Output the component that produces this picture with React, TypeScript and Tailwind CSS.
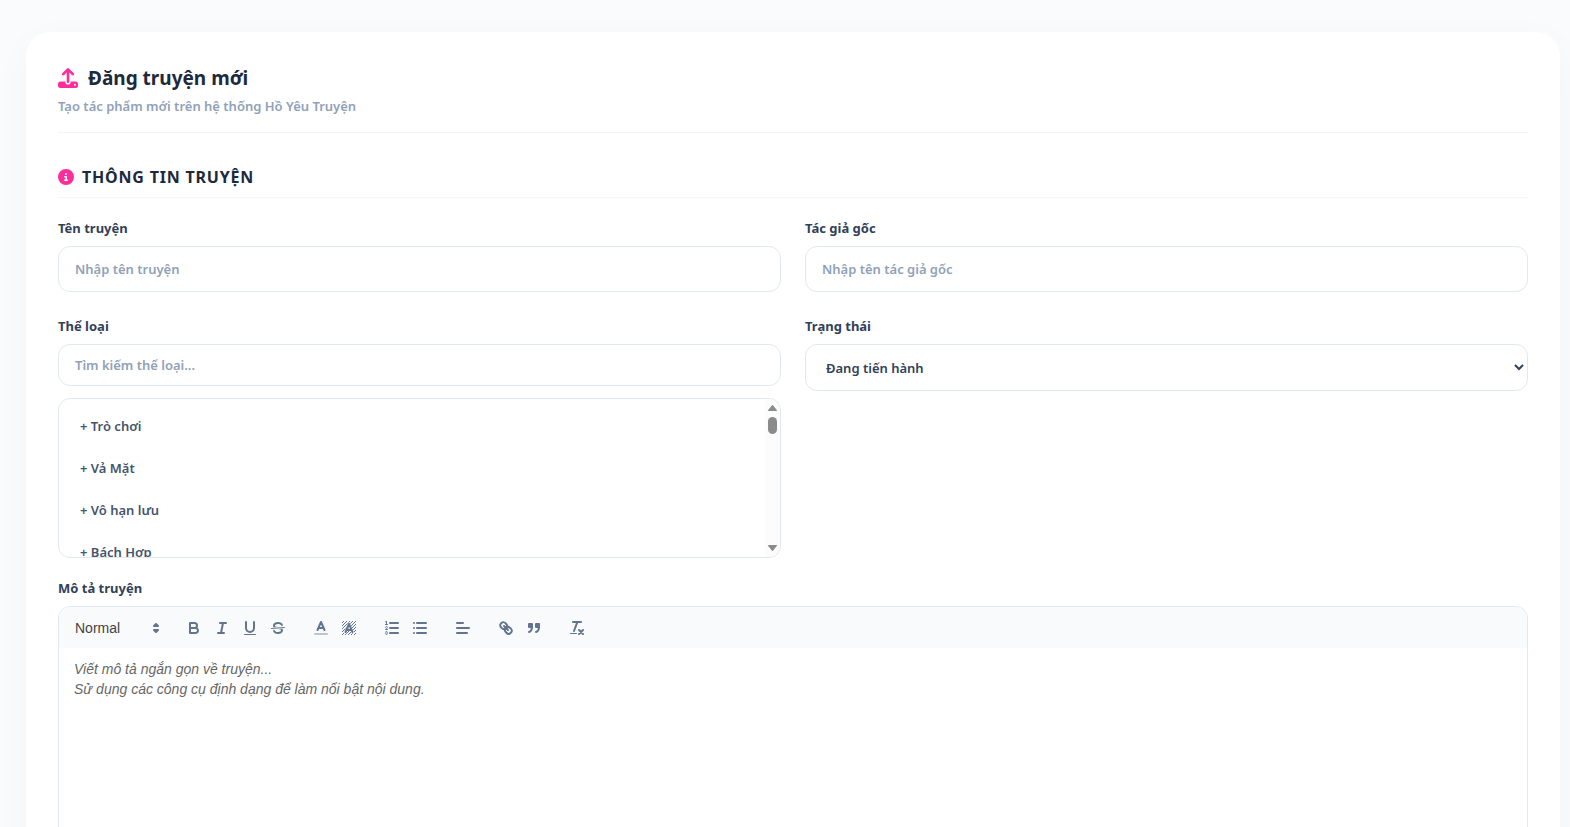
import { ReactNode, useState } from "react";
import { FaCircleInfo } from "react-icons/fa6";

const genres = ["Trò chơi", "Vả Mặt", "Vô hạn lưu", "Bách Hợp"];

const labelClass = "mb-2 block text-[13px] leading-5 font-bold text-slate-700";
const fieldClass =
  "block w-full rounded-xl border border-slate-200 bg-white px-4 text-[13px] leading-5 font-semibold text-slate-700 outline-none placeholder:text-slate-400 focus:border-pink-400";

function UploadIcon() {
  return (
    <svg className="size-5 text-[#ff2d9b]" viewBox="0 0 20 20" fill="none" stroke="currentColor" aria-hidden="true">
      <path
        fill="currentColor"
        stroke="none"
        d="M2.5 13.5H7.4V14a2.6 2.6 0 0 0 5.2 0V13.5H17.5A2.5 2.5 0 0 1 20 16v1.5a2.5 2.5 0 0 1-2.5 2.5h-15A2.5 2.5 0 0 1 0 17.5V16a2.5 2.5 0 0 1 2.5-2.5Z"
      />
      <circle cx="16.9" cy="16.8" r="1" fill="#fff" stroke="none" />
      <path strokeWidth="2.6" strokeLinecap="round" strokeLinejoin="round" d="M10 13.8V1.8M5.2 6.2l4.8-4.8 4.8 4.8" />
    </svg>
  );
}

interface ToolProps {
  label: string;
  children: ReactNode;
}

function Tool({ label, children }: ToolProps) {
  return (
    <button type="button" aria-label={label} className="h-6 w-7 px-[5px] py-[3px] text-slate-500 hover:text-pink-500">
      <svg
        className="size-[18px]"
        viewBox="0 0 18 18"
        fill="none"
        stroke="currentColor"
        strokeWidth="2"
        strokeLinecap="round"
        strokeLinejoin="round"
      >
        {children}
      </svg>
    </button>
  );
}

function Group({ children }: { children: ReactNode }) {
  return <div className="mr-[15px] flex">{children}</div>;
}

function Toolbar() {
  return (
    <div role="toolbar" aria-label="Định dạng" className="flex flex-wrap bg-slate-50 px-2 pt-[9px] pb-2">
      <Group>
        <button
          type="button"
          className="flex h-6 w-[98px] items-center justify-between pl-2 font-['Liberation_Sans',sans-serif] text-sm font-medium text-[#444]"
        >
          Normal
          <svg
            className="size-[18px] text-slate-500"
            viewBox="0 0 18 18"
            fill="currentColor"
            stroke="currentColor"
            strokeWidth="2"
            strokeLinejoin="round"
            aria-hidden="true"
          >
            <polygon points="7 11 9 13 11 11 7 11" />
            <polygon points="7 7 9 5 11 7 7 7" />
          </svg>
        </button>
      </Group>
      <Group>
        <Tool label="Đậm">
          <path d="M5,4H9.5A2.5,2.5,0,0,1,12,6.5v0A2.5,2.5,0,0,1,9.5,9H5V4Z" />
          <path d="M5,9h5.5A2.5,2.5,0,0,1,13,11.5v0A2.5,2.5,0,0,1,10.5,14H5V9Z" />
        </Tool>
        <Tool label="Nghiêng">
          <path d="M7,4H13M5,14H11M8,14L10,4" />
        </Tool>
        <Tool label="Gạch chân">
          <path d="M5,3V9a4.012,4.012,0,0,0,4,4H9a4.012,4.012,0,0,0,4-4V3" />
          <rect x="3" y="15" width="12" height="1" rx="0.5" fill="currentColor" stroke="none" />
        </Tool>
        <Tool label="Gạch ngang">
          <path strokeWidth="1" d="M15.5,8.5L2.5,9.5" />
          <path
            fill="currentColor"
            stroke="none"
            d="M9.007,8C6.542,7.791,6,7.519,6,6.5,6,5.792,7.283,5,9,5c1.571,0,2.765.679,2.969,1.309a1,1,0,0,0,1.9-.617C13.356,4.106,11.354,3,9,3,6.2,3,4,4.538,4,6.5a3.2,3.2,0,0,0,.5,1.843Z"
          />
          <path
            fill="currentColor"
            stroke="none"
            d="M8.984,10C11.457,10.208,12,10.479,12,11.5c0,.708-1.283,1.5-3,1.5-1.571,0-2.765-.679-2.969-1.309a1,1,0,1,0-1.9.617C4.644,13.894,6.646,15,9,15c2.8,0,5-1.538,5-3.5a3.2,3.2,0,0,0-.5-1.843Z"
          />
        </Tool>
      </Group>
      <Group>
        <Tool label="Màu chữ">
          <path opacity="0.4" d="M3,15H15" />
          <path d="M5.5,11L9,3L12.5,11M11.63,9H6.38" />
        </Tool>
        <Tool label="Màu nền">
          <path
            strokeWidth="1"
            strokeLinecap="butt"
            d="M2,4L4,2M2,7L7,2M2,10L10,2M2,13L13,2M2,16L16,2M5,16L16,5M8,16L16,8M11,16L16,11M14,16L16,14"
          />
          <path className="stroke-slate-50" strokeWidth="3" d="M5.5,13L9,5L12.5,13" />
          <path d="M5.5,13L9,5L12.5,13M11.63,11H6.38" />
        </Tool>
      </Group>
      <Group>
        <Tool label="Danh sách số">
          <path d="M7,4H15M7,9H15M7,14H15" />
          <path strokeWidth="1" d="M2.5,5.5H4.5" />
          <path
            fill="currentColor"
            stroke="none"
            d="M3.5,6A.5.5,0,0,1,3,5.5V3.085l-.276.138A.5.5,0,0,1,2.053,3c-.124-.247-.023-.324.224-.447l1-.5A.5.5,0,0,1,4,2.5v3A.5.5,0,0,1,3.5,6Z"
          />
          <path strokeWidth="1" d="M4.5,10.5h-2c0-.234,1.85-1.076,1.85-2.234A.959.959,0,0,0,2.5,8.156" />
          <path
            strokeWidth="1"
            d="M2.5,14.846a.959.959,0,0,0,1.85-.109A.7.7,0,0,0,3.75,14a.688.688,0,0,0,.6-.736.959.959,0,0,0-1.85-.109"
          />
        </Tool>
        <Tool label="Danh sách">
          <path d="M6,4H15M6,9H15M6,14H15M3,4H3.01M3,9H3.01M3,14H3.01" />
        </Tool>
      </Group>
      <Group>
        <Tool label="Căn lề">
          <path d="M3,4H9M3,9H15M3,14H13" />
        </Tool>
      </Group>
      <Group>
        <Tool label="Liên kết">
          <path d="M7,7L11,11" />
          <path d="M8.9,4.577a3.476,3.476,0,0,1,.36,4.679A3.476,3.476,0,0,1,4.577,8.9C3.185,7.5,2.035,6.4,4.217,4.217S7.5,3.185,8.9,4.577Z" />
          <path d="M13.423,9.1a3.476,3.476,0,0,0-4.679-.36,3.476,3.476,0,0,0,.36,4.679c1.392,1.392,2.5,2.542,4.679.36S14.815,10.5,13.423,9.1Z" />
        </Tool>
        <Tool label="Trích dẫn">
          <rect x="4" y="5" width="3" height="3" fill="currentColor" />
          <rect x="11" y="5" width="3" height="3" fill="currentColor" />
          <path d="M7,8c0,4.031-3,5-3,5M14,8c0,4.031-3,5-3,5" />
        </Tool>
      </Group>
      <Group>
        <Tool label="Xóa định dạng">
          <path d="M5,3H13M6,12L9.35,3M11,11L15,15M15,11L11,15" />
          <rect x="2" y="14" width="7" height="1" rx="0.5" fill="currentColor" stroke="none" />
        </Tool>
      </Group>
    </div>
  );
}

function GenrePicker() {
  const [query, setQuery] = useState("");
  const [selected, setSelected] = useState<string[]>([]);

  const toggle = (genre: string) =>
    setSelected((prev) => (prev.includes(genre) ? prev.filter((g) => g !== genre) : [...prev, genre]));

  const visible = genres.filter((g) => g.toLowerCase().includes(query.toLowerCase()));

  return (
    <div>
      <label htmlFor="genre" className={labelClass}>
        Thể loại
      </label>
      <input
        id="genre"
        type="text"
        value={query}
        onChange={(e) => setQuery(e.target.value)}
        placeholder="Tìm kiếm thể loại..."
        className={`${fieldClass} py-[10px]`}
      />
      <div className="mt-3 flex h-40 overflow-hidden rounded-xl border border-slate-200">
        <div className="flex-1 overflow-y-auto p-2 [scrollbar-width:none]">
          {visible.map((genre) => (
            <button
              key={genre}
              type="button"
              aria-pressed={selected.includes(genre)}
              onClick={() => toggle(genre)}
              className={`mb-1 block w-full rounded-lg border px-3 py-2 text-left text-[13px] leading-5 font-semibold ${
                selected.includes(genre)
                  ? "border-pink-200 bg-pink-50 text-pink-600"
                  : "border-transparent text-slate-600"
              }`}
            >
              + {genre}
            </button>
          ))}
        </div>
        <div aria-hidden="true" className="flex w-[15px] flex-col items-center bg-[#fcfcfc] py-[6px] text-[#8b8b8b]">
          <svg className="h-[6px] w-[9px]" viewBox="0 0 9 6" fill="currentColor">
            <path d="M3.8.4a1 1 0 0 1 1.4 0L8.8 5a.6.6 0 0 1-.5 1H.7a.6.6 0 0 1-.5-1Z" />
          </svg>
          <span className="mt-[6px] h-[17px] w-[9px] rounded-full bg-[#8b8b8b]" />
          <svg className="mt-auto h-[6px] w-[9px]" viewBox="0 0 9 6" fill="currentColor">
            <path d="M3.8 5.6a1 1 0 0 0 1.4 0L8.8 1a.6.6 0 0 0-.5-1H.7a.6.6 0 0 0-.5 1Z" />
          </svg>
        </div>
      </div>
    </div>
  );
}

export default function App() {
  return (
    <div className="min-h-screen bg-[#fafbfd] pt-8 pr-[10px] pb-8 pl-[26px] font-['Noto_Sans',sans-serif]">
      <main className="rounded-3xl bg-white p-8 shadow-[0_10px_40px_rgba(15,23,42,0.03)]">
        <header className="border-b border-slate-100 pb-4">
          <h1 className="flex items-center gap-[10px] text-[19px] leading-7 font-bold text-slate-800">
            <UploadIcon />
            Đăng truyện mới
          </h1>
          <p className="mt-1 text-[13px] leading-5 font-semibold text-slate-400">
            Tạo tác phẩm mới trên hệ thống Hồ Yêu Truyện
          </p>
        </header>

        <form className="mt-8" onSubmit={(e) => e.preventDefault()}>
          <h2 className="mb-5 flex items-center gap-2 border-b border-slate-100 pb-2 text-base leading-6 font-bold tracking-wider text-slate-800 uppercase">
            <FaCircleInfo className="size-4 text-[#ff2d9b]" aria-hidden="true" />
            Thông tin truyện
          </h2>

          <div className="grid grid-cols-1 gap-6 md:grid-cols-2">
            <div>
              <label htmlFor="title" className={labelClass}>
                Tên truyện
              </label>
              <input id="title" type="text" placeholder="Nhập tên truyện" className={`${fieldClass} py-3`} />
            </div>
            <div>
              <label htmlFor="author" className={labelClass}>
                Tác giả gốc
              </label>
              <input id="author" type="text" placeholder="Nhập tên tác giả gốc" className={`${fieldClass} py-3`} />
            </div>
            <GenrePicker />
            <div>
              <label htmlFor="status" className={labelClass}>
                Trạng thái
              </label>
              <select id="status" className={`${fieldClass} h-[47px]`}>
                <option>Đang tiến hành</option>
                <option>Hoàn thành</option>
                <option>Tạm dừng</option>
              </select>
            </div>
          </div>

          <div className="mt-5">
            <label htmlFor="description" className={labelClass}>
              Mô tả truyện
            </label>
            <div className="overflow-hidden rounded-xl border border-slate-200">
              <Toolbar />
              <textarea
                id="description"
                placeholder={"Viết mô tả ngắn gọn về truyện...\nSử dụng các công cụ định dạng để làm nổi bật nội dung."}
                className="block min-h-[250px] w-full resize-none bg-white px-[15px] py-[11px] font-['Liberation_Sans',sans-serif] text-sm leading-5 text-slate-700 outline-none placeholder:text-[#666] placeholder:italic"
              />
            </div>
          </div>
        </form>
      </main>
    </div>
  );
}
